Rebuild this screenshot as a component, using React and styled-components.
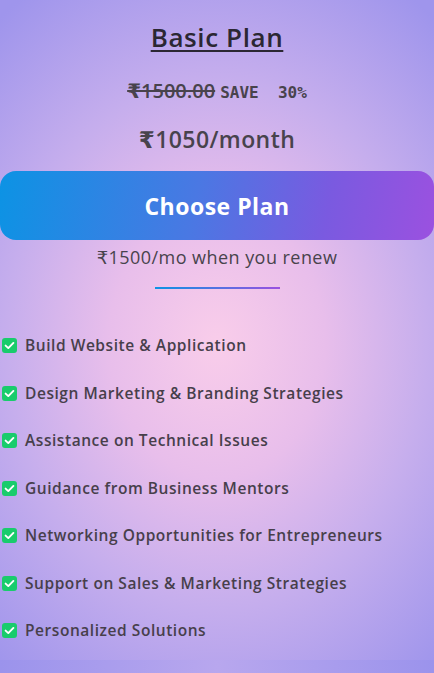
import React from "react";
import styled, { createGlobalStyle } from "styled-components";

const Global = createGlobalStyle`
  html, body { margin: 0; padding: 0; }
  body {
    font-family: "Open Sans", "DejaVu Sans", sans-serif;
    background: linear-gradient(90deg, #9b93ec 0%, #b8a7ee 50%, #9b93ec 100%);
    min-height: 673px;
  }
`;

const Card = styled.div`
  height: 660px;
  box-sizing: border-box;
  padding-top: 21px;
  background: radial-gradient(ellipse 78% 64% at 50% 52%, #f9cdea 0%, #e8beeb 32%, #c6aeed 62%, #9f95ec 100%);
  display: flex;
  flex-direction: column;
  align-items: center;
  overflow: hidden;
`;

const Title = styled.h2`
  margin: 0;
  font-size: 26px;
  font-weight: 600;
  letter-spacing: 0.6px;
  line-height: 33px;
  color: #2b2733;
  text-decoration: underline;
  text-decoration-thickness: 2px;
  text-underline-offset: 3px;
`;

const PriceRow = styled.div`
  margin-top: 23px;
  display: flex;
  align-items: baseline;
  gap: 5px;
  color: #48434c;
  line-height: 28px;
`;

const OldPrice = styled.span`
  font-size: 20px;
  font-weight: 600;
  text-decoration: line-through;
  text-decoration-thickness: 2px;
`;

const Save = styled.span`
  font-family: "DejaVu Sans Mono", monospace;
  font-size: 16px;
  font-weight: 700;
  white-space: pre;
`;

const Price = styled.div`
  margin-top: 17px;
  font-size: 23px;
  font-weight: 600;
  letter-spacing: 0.4px;
  line-height: 30px;
  color: #48434c;
`;

const Button = styled.button`
  margin-top: 17px;
  width: 100%;
  height: 69px;
  border: none;
  border-radius: 16px;
  background: linear-gradient(100deg, #0c93e4 0%, #4a78e3 45%, #7a5ae0 75%, #9b51e0 100%);
  color: #fff;
  font-family: inherit;
  font-size: 23px;
  font-weight: 700;
  letter-spacing: 0.5px;
  cursor: pointer;
`;

const Renew = styled.p`
  margin: 5px 0 0;
  font-size: 18px;
  letter-spacing: 0.45px;
  line-height: 24px;
  color: #48434c;
`;

const Divider = styled.div`
  margin-top: 18px;
  width: 125px;
  height: 2px;
  background: linear-gradient(90deg, #0c93e4, #9b51e0);
`;

const Features = styled.ul`
  list-style: none;
  margin: 46px 0 0;
  padding: 0 0 0 2px;
  align-self: stretch;
  display: flex;
  flex-direction: column;
  gap: 26px;
`;

const Feature = styled.li`
  display: flex;
  align-items: center;
  gap: 8px;
  font-size: 15.5px;
  font-weight: 600;
  letter-spacing: 0.55px;
  line-height: 21.5px;
  color: #473f4b;
  white-space: nowrap;
`;

const Check = () => (
  <svg width="15" height="15" viewBox="0 0 15 15" aria-hidden="true">
    <rect x="0" y="0" width="15" height="15" rx="3" fill="#19cc6c" />
    <path d="M3.6 7.6 L6.3 10.1 L11.4 4.9" fill="none" stroke="#fff" strokeWidth="1.9" strokeLinecap="round" strokeLinejoin="round" />
  </svg>
);

const items = [
  "Build Website & Application",
  "Design Marketing & Branding Strategies",
  "Assistance on Technical Issues",
  "Guidance from Business Mentors",
  "Networking Opportunities for Entrepreneurs",
  "Support on Sales & Marketing Strategies",
  "Personalized Solutions",
];

export default function App() {
  return (
    <>
      <Global />
      <Card>
        <Title>Basic Plan</Title>
        <PriceRow>
          <OldPrice>₹1500.00</OldPrice>
          <Save>SAVE  30%</Save>
        </PriceRow>
        <Price>₹1050/month</Price>
        <Button>Choose Plan</Button>
        <Renew>₹1500/mo when you renew</Renew>
        <Divider />
        <Features>
          {items.map((t) => (
            <Feature key={t}>
              <Check />
              {t}
            </Feature>
          ))}
        </Features>
      </Card>
    </>
  );
}
